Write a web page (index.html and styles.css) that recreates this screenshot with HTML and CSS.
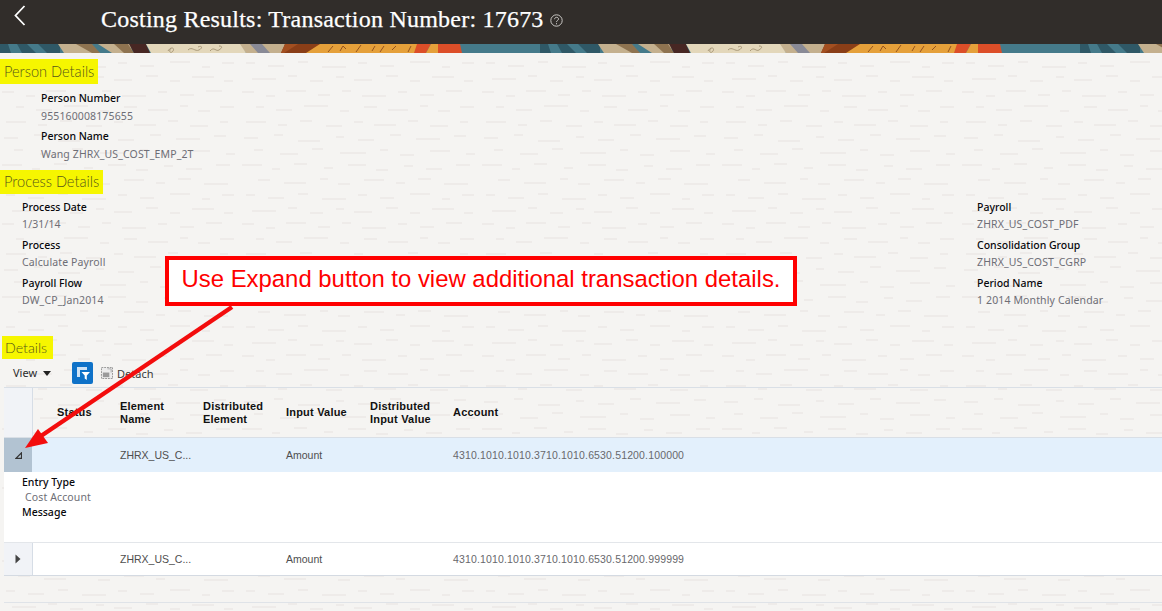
FILE: index.html
```html
<!DOCTYPE html>
<html lang="en">
<head>
<meta charset="utf-8">
<title>Costing Results</title>
<link rel="stylesheet" href="styles.css">
</head>
<body>
<svg class="paper" aria-hidden="true">
  <defs>
    <pattern id="paper" width="240" height="132" patternUnits="userSpaceOnUse">
      <path class="paper-dash" d="M4 6h14M34 3h9M58 9h22M96 5h8M118 8h16M150 3h11M176 7h24M214 4h12
      M14 18h9M40 22h18M72 17h11M100 21h26M140 18h8M160 23h14M190 19h20M226 22h9
      M2 33h20M32 37h8M54 32h13M84 36h9M108 33h18M136 38h12M164 34h9M186 37h16M216 33h14
      M18 48h12M44 51h22M80 47h8M98 52h12M124 48h20M156 51h9M178 47h13M204 52h24
      M6 63h9M28 66h16M58 62h10M82 67h24M118 63h9M140 66h14M170 62h20M202 67h8M222 63h12
      M12 79h24M48 76h9M70 81h13M96 77h8M114 80h18M146 76h12M170 81h10M192 77h22M224 81h9
      M2 92h12M26 96h9M46 91h20M78 95h12M102 91h9M122 96h24M158 92h9M180 95h14M206 91h16
      M16 107h8M36 110h16M64 106h24M100 111h9M124 107h13M148 110h20M180 106h8M198 111h12M220 107h14
      M6 122h20M38 125h9M60 121h12M86 126h16M114 122h9M134 125h22M168 121h10M190 126h18M220 122h8"/>
    </pattern>
  </defs>
  <rect class="paper-fill" width="100%" height="100%"/>
</svg>

<header class="titlebar">
  <button class="back" type="button" aria-label="Back">
    <svg class="back-icon" viewBox="0 0 12 21"><path d="M10.5 1 1.5 10.5l9 9.5"/></svg>
  </button>
  <h1 class="title">Costing Results: Transaction Number: 17673</h1>
  <svg class="help" viewBox="0 0 13 13">
    <circle cx="6.5" cy="6.5" r="5.7"/>
    <path d="M4.6 5.2c0-2.5 3.9-2.5 3.9-.2 0 1.5-2 1.5-2 3.1"/>
    <path d="M6.5 9.2v1.1"/>
  </svg>
</header>

<svg class="banner" aria-hidden="true">
  <defs>
    <pattern id="bannerTile" width="540" height="9" patternUnits="userSpaceOnUse">
      <rect width="540" height="9" fill="#457a8a"/>
      <g fill="#2f5866">
        <polygon points="0,0 8,0 11,9 0,9"/>
        <polygon points="17,0 27,0 36,9 22,9"/>
        <polygon points="38,0 60,0 60,9 47,9"/>
      </g>
      <g fill="#c4b08e">
        <polygon points="58,0 80,0 100,9 64,9"/>
        <polygon points="98,0 130,0 133,9 112,9"/>
        <polygon points="238,0 285,0 283,9 246,9"/>
      </g>
      <g fill="#8e7350">
        <polygon points="76,0 92,0 100,9 92,9"/>
        <polygon points="114,0 128,0 134,9 124,9"/>
      </g>
      <polygon fill="#472723" points="129,0 146,0 150,9 134,9"/>
      <polygon fill="#e3d7ba" points="146,0 240,0 246,9 151,9"/>
      <polygon fill="#898a96" points="250,0 262,0 270,9 258,9"/>
      <polygon fill="#8a3e17" points="285,0 322,0 308,9 281,9"/>
      <polygon fill="#a34f20" points="285,0 298,0 284,9 281,9"/>
      <polygon fill="#e5a03a" points="320,0 417,0 417,9 306,9"/>
      <polygon fill="#dc4e28" points="417,0 431,0 426,9 414,9"/>
      <polygon fill="#e5a03a" points="431,0 438,0 438,9 426,9"/>
      <polygon fill="#dc4e28" points="438,0 460,0 462,9 438,9"/>
      <g class="squiggle">
        <path d="M168 7c3-5 7-3 5 0s-5 1-2-3M188 6c4-4 7 2 11 0s3-5-1-3M210 7c4-5 6 1 9-1s4-4 0-4"/>
      </g>
      <g class="script">
        <path d="M328 8l5-6M340 7l3-5 3 3M356 8l5-7M372 7l3-5M380 8l4-6M392 6l4-4M408 8l3-6"/>
      </g>
    </pattern>
  </defs>
  <rect class="banner-fill" width="100%" height="9"/>
</svg>

<main class="page">
  <h2 class="section-title person-title"><span>Person Details</span></h2>
  <div class="fields person-fields">
    <div class="field"><div class="label">Person Number</div><div class="value">955160008175655</div></div>
    <div class="field"><div class="label">Person Name</div><div class="value">Wang ZHRX_US_COST_EMP_2T</div></div>
  </div>

  <h2 class="section-title process-title"><span>Process Details</span></h2>
  <div class="process-grid">
    <div class="fields process-fields">
      <div class="field"><div class="label">Process Date</div><div class="value">1/31/14</div></div>
      <div class="field"><div class="label">Process</div><div class="value">Calculate Payroll</div></div>
      <div class="field"><div class="label">Payroll Flow</div><div class="value">DW_CP_Jan2014</div></div>
    </div>
    <div class="fields process-fields process-right">
      <div class="field"><div class="label">Payroll</div><div class="value">ZHRX_US_COST_PDF</div></div>
      <div class="field"><div class="label">Consolidation Group</div><div class="value">ZHRX_US_COST_CGRP</div></div>
      <div class="field"><div class="label">Period Name</div><div class="value">1 2014 Monthly Calendar</div></div>
    </div>
  </div>

  <h2 class="section-title details-title"><span>Details</span></h2>
  <div class="toolbar">
    <span class="view-menu">View<i class="caret"></i></span>
    <span class="filter-btn">
      <svg viewBox="0 0 14 14"><path class="filter-a" d="M1 1h10v3H4v7H1z"/><path class="filter-b" d="M5.5 6H14l-3.2 3.6V14L8.7 12.600V9.600z"/></svg>
    </span>
    <span class="detach">
      <svg class="detach-icon" viewBox="0 0 13 13"><rect class="detach-box" x=".5" y=".5" width="12" height="12"/><rect class="detach-fill" x="2" y="6" width="7" height="5"/><path class="detach-mark" d="M7 2h4v4"/></svg>
      Detach
    </span>
  </div>

  <div class="table">
    <div class="row head">
      <div class="gutter"></div>
      <div class="cell status"><b>Status</b></div>
      <div class="cell"><b>Element<br>Name</b></div>
      <div class="cell"><b>Distributed<br>Element</b></div>
      <div class="cell"><b>Input Value</b></div>
      <div class="cell"><b>Distributed<br>Input Value</b></div>
      <div class="cell"><b>Account</b></div>
    </div>
    <div class="row data selected">
      <div class="gutter"><svg class="disc" viewBox="0 0 7 7"><path class="disc-open" d="M6.500.8V6.400H1z"/></svg></div>
      <div class="cell status"></div>
      <div class="cell">ZHRX_US_C...</div>
      <div class="cell"></div>
      <div class="cell">Amount</div>
      <div class="cell"></div>
      <div class="cell account">4310.1010.1010.3710.1010.6530.51200.100000</div>
    </div>
    <div class="detail">
      <div class="label">Entry Type</div>
      <div class="value indent">Cost Account</div>
      <div class="label">Message</div>
    </div>
    <div class="row data">
      <div class="gutter"><svg class="disc disc-closed" viewBox="0 0 6 10"><path d="M.5.5 5.500 5 .5 9.500z"/></svg></div>
      <div class="cell status"></div>
      <div class="cell">ZHRX_US_C...</div>
      <div class="cell"></div>
      <div class="cell">Amount</div>
      <div class="cell"></div>
      <div class="cell account">4310.1010.1010.3710.1010.6530.51200.999999</div>
    </div>
  </div>
  <div class="table-foot"></div>
</main>

<div class="callout">Use Expand button to view additional transaction details.</div>
<svg class="arrow" viewBox="0 0 1162 611" aria-hidden="true">
  <line x1="232" y1="307" x2="38" y2="438"/>
  <polygon points="25,448 38,429 48,443"/>
</svg>
</body>
</html>
```

FILE: styles.css
```css
* { box-sizing: border-box; }
html, body { margin: 0; height: 611px; overflow: hidden; }
body {
  position: relative;
  background: #f5f4f2;
  font-family: "Noto Sans", "Open Sans", sans-serif;
  font-size: 10.5px;
  color: #111;
}

.paper { position: absolute; left: 0; top: 0; width: 100%; height: 100%; z-index: -1; }
.paper-fill { fill: url(#paper); }
.paper-dash { fill: none; stroke: #ebe9e6; stroke-width: 1.4; }

.titlebar {
  height: 44px;
  background: #312d2a;
  display: flex;
  align-items: center;
  color: #fff;
}
.back {
  width: 101px;
  height: 44px;
  padding: 5px 0 0 14px;
  margin: 0;
  border: 0;
  background: none;
  display: flex;
  align-items: flex-start;
}
.back-icon { width: 12px; height: 21px; fill: none; stroke: #fff; stroke-width: 1.8; }
.title {
  margin: 0 0 6px;
  font: 400 24px/1 "Liberation Serif", serif;
  color: #fff;
  letter-spacing: .22px;
  -webkit-text-stroke: .25px #fff;
}
.help { width: 13px; height: 13px; margin: 0 0 4px 6px; fill: none; stroke: #c9c7c4; stroke-width: 1; }

.banner { display: block; width: 100%; height: 9px; }
.banner-fill { fill: url(#bannerTile); }
.squiggle path { fill: none; stroke: #a89878; stroke-width: 1; }
.script path { fill: none; stroke: #8a4a1c; stroke-width: .9; }

.section-title { margin: 0; font-weight: 300; font-family: Lato, "Open Sans", sans-serif; color: #55551a; }
.section-title span { display: inline-block; background: #f6f600; padding: 0 4px; }
.person-title { margin-top: 6px; font-size: 14.6px; line-height: 25px; }
.person-title span { height: 25px; }
.process-title { margin-top: 7px; font-size: 14.6px; line-height: 24px; }
.process-title span { height: 24px; }
.details-title { margin-top: 27px; padding-left: 2px; font-size: 14.2px; line-height: 23px; }
.details-title span { height: 23px; padding: 0 6px 0 3px; }

.fields { display: flex; flex-direction: column; }
.person-fields { padding: 5px 0 0 41px; gap: 2px; }
.person-fields .label, .person-fields .value { line-height: 18px; }
.process-grid { display: flex; justify-content: space-between; padding: 5px 0 0 22px; }
.process-right { width: 185px; }
.process-fields { gap: 4px; }
.process-fields .label, .process-fields .value { line-height: 17px; }

.label { color: #08080c; font-weight: 500; }
.value { color: #6e6e76; letter-spacing: .13px; }

.toolbar { display: flex; align-items: center; height: 22px; margin-top: 3px; padding-left: 13px; }
.view-menu { display: flex; align-items: center; width: 59px; font-size: 11px; color: #2a2a2a; line-height: 20px; }
.caret {
  margin-left: 6px;
  border-left: 4px solid transparent;
  border-right: 4px solid transparent;
  border-top: 5px solid #222;
}
.filter-btn {
  width: 21px; height: 22px;
  background: #0f72c8;
  border-radius: 2px;
  display: flex; align-items: center; justify-content: center;
}
.filter-btn svg { width: 14px; height: 14px; }
.filter-a { fill: #cfe3f5; }
.filter-b { fill: #fff; }
.detach { display: flex; align-items: center; gap: 4px; margin-left: 8px; font-size: 11px; color: #3a3a3a; }
.detach-icon { width: 12px; height: 12px; }
.detach-box { fill: #ececec; stroke: #8f8f8f; stroke-dasharray: 2 1; }
.detach-fill { fill: #9a9a9a; }
.detach-mark { fill: none; stroke: #aaa; }

.table {
  margin: 3px 0 0 4px;
  border-top: 1px solid #d9dfe6;
  font-family: "Liberation Sans", Arial, sans-serif;
  font-size: 10.5px;
  color: #4e4e4e;
}
.row {
  display: grid;
  grid-template-columns: 29px 87px 83px 83px 84px 83px 1fr;
  align-items: center;
}
.cell { min-width: 0; white-space: nowrap; }
.status { padding-left: 24px; }
.head { height: 50px; border-bottom: 1px solid #d9dfe6; }
.head b { display: block; font-size: 11px; line-height: 13px; color: #111; letter-spacing: .2px; }
.gutter {
  align-self: stretch;
  border-right: 1px solid #d6dde6;
  background: #f1f3f7;
  display: flex; align-items: center; justify-content: center;
}
.data { height: 33px; background: #fff; border-bottom: 1px solid #e3e6ea; }
.selected { height: 34px; background: #e3f0fc; border-bottom: 0; }
.selected .gutter { background: #b2c3d2; border-right-color: #e3f0fc; }
.account { color: #68686c; letter-spacing: .15px; }
.disc { width: 7px; height: 7px; }
.disc-open { fill: none; stroke: #333; stroke-width: 1.2; }
.disc-closed { width: 6px; height: 10px; fill: #444; }

.detail {
  height: 71px;
  background: #fff;
  padding: 3px 0 0 18px;
  border-bottom: 1px solid #e3e6ea;
  font-family: "Noto Sans", "Open Sans", sans-serif;
  line-height: 15px;
}
.indent { padding-left: 3px; }

.table > .data:last-child { border-bottom: 1px solid #d4dae2; }
.table-foot { margin: 26px 0 0 4px; border-top: 1px solid #dfe3e8; }

.callout {
  position: absolute;
  left: 165px;
  top: 256px;
  width: 632px;
  height: 50px;
  background: #fff;
  border: 4px solid #f00;
  color: #f00;
  font: 23.9px/37px "Liberation Sans", Arial, sans-serif;
  text-align: center;
  white-space: nowrap;
}
.arrow { position: absolute; left: 0; top: 0; width: 1162px; height: 611px; pointer-events: none; }
.arrow line { stroke: #f30d0d; stroke-width: 4.5; }
.arrow polygon { fill: #f30d0d; }
```
